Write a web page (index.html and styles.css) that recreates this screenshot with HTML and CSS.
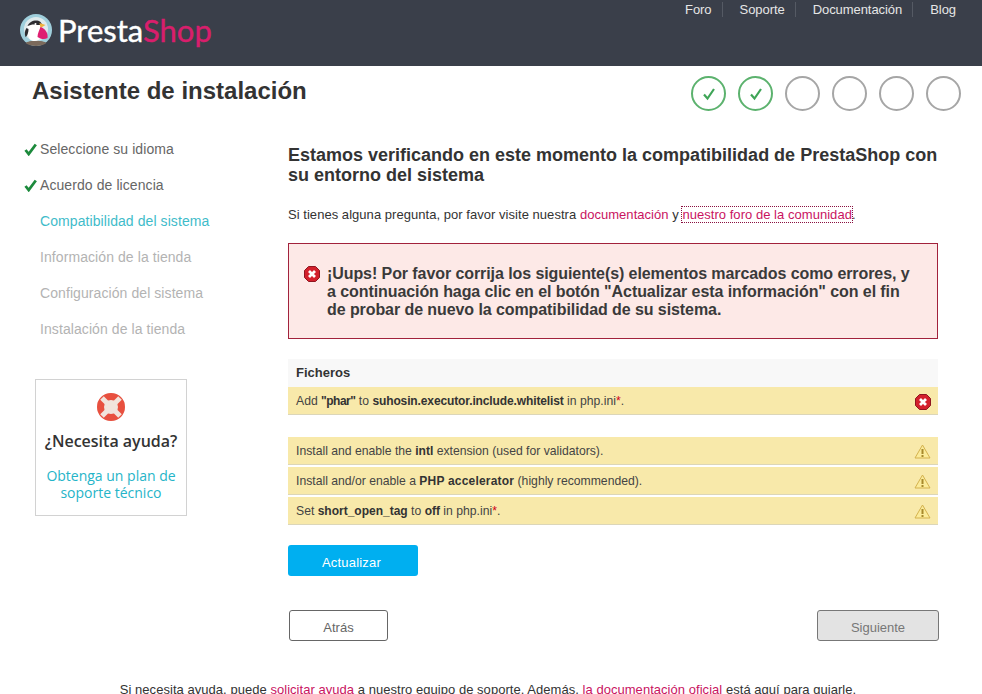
FILE: index.html
```html
<!DOCTYPE html>
<html lang="es">
<head>
  <meta charset="UTF-8" />
  <meta name="viewport" content="width=device-width, initial-scale=1" />
  <title>Asistente de instalación</title>
  <link rel="stylesheet" href="styles.css">
</head>
<body>

<!-- Top bar -->
<header class="topbar">
  <a class="logo" href="#">
    <svg class="logo-mark" width="34" height="33" viewBox="0 0 33 33">
      <circle cx="16.5" cy="16" r="16" fill="#9fcfdc"/>
      <circle cx="16.5" cy="15" r="12" fill="#dfeaec"/>
      <path d="M6 29c3-3 18-3 21 0c-5 4-16 4-21 0z" fill="#7b6a5c"/>
      <path d="M8 12c2-5 9-7 13-4c1 2 1 3 0 4c1 5 1 10-2 14c-3 2-7 1-9-1c-2-4-3-9-2-13z" fill="#fff"/>
      <path d="M8 12c2-5 9-7 13-4l2 3l-6 0c-3-1-6 0-9 1z" fill="#2c2c30"/>
      <path d="M7 14c-2 3-2 6-1 9c2-1 3-5 3-8z" fill="#2c2c30"/>
      <path d="M20 9l6 2l-5 3z" fill="#f0b23c"/>
      <path d="M21 13c4 1 8 6 7 11c-3 2-7 1-10-1c0-4 2-7 3-10z" fill="#df1f72"/>
      <circle cx="16" cy="10" r="1" fill="#fff"/>
    </svg>
    <span class="logo-text">Presta<span class="logo-shop">Shop</span></span>
  </a>
  <nav class="topnav">
    <a href="#">Foro</a>
    <a href="#">Soporte</a>
    <a href="#">Documentación</a>
    <a href="#">Blog</a>
  </nav>
</header>

<!-- Title and progress -->
<div class="titlebar">
  <h1>Asistente de instalación</h1>
  <ol class="progress">
    <li class="done"><svg width="16" height="16" viewBox="0 0 16 16"><path d="M3 8.500l3.500 4L13 3" fill="none" stroke="#3fa557" stroke-width="2.200"/></svg></li>
    <li class="done"><svg width="16" height="16" viewBox="0 0 16 16"><path d="M3 8.500l3.500 4L13 3" fill="none" stroke="#3fa557" stroke-width="2.200"/></svg></li>
    <li></li>
    <li></li>
    <li></li>
    <li></li>
  </ol>
</div>

<div class="layout">
  <aside class="sidebar">
    <ul class="steps">
      <li class="step-done">
        <svg class="tick" width="13" height="13" viewBox="0 0 13 13"><path d="M1.500 7l3.200 4L11.800 1.500" fill="none" stroke="#1c8a3c" stroke-width="2.800"/></svg>
        Seleccione su idioma
      </li>
      <li class="step-done">
        <svg class="tick" width="13" height="13" viewBox="0 0 13 13"><path d="M1.500 7l3.200 4L11.800 1.500" fill="none" stroke="#1c8a3c" stroke-width="2.800"/></svg>
        Acuerdo de licencia
      </li>
      <li class="step-current">Compatibilidad del sistema</li>
      <li>Información de la tienda</li>
      <li>Configuración del sistema</li>
      <li>Instalación de la tienda</li>
    </ul>

    <div class="helpbox">
      <svg width="28" height="28" viewBox="0 0 28 28">
        <circle cx="14" cy="14" r="14" fill="#f1e4dc"/>
        <circle cx="14" cy="14" r="10.500" fill="none" stroke="#e8503f" stroke-width="7"/>
        <path d="M5 5l5 5M23 5l-5 5M5 23l5-5M23 23l-5-5" stroke="#f1e4dc" stroke-width="5"/>
      </svg>
      <h3>¿Necesita ayuda?</h3>
      <a href="#">Obtenga un plan de soporte técnico</a>
    </div>
  </aside>

  <main class="content">
    <h2>Estamos verificando en este momento la compatibilidad de PrestaShop con su entorno del sistema</h2>
    <p class="intro">Si tienes alguna pregunta, por favor visite nuestra <a href="#">documentación</a> y <a class="focused" href="#">nuestro foro de la comunidad</a>.</p>

    <div class="alert">
      <svg class="alert-icon" width="16" height="16" viewBox="0 0 16 16">
        <path d="M4.500 .5h7l4 4v7l-4 4h-7l-4-4v-7z" fill="#d3202c" stroke="#8e1620" stroke-linejoin="round"/>
        <path d="M5 5l6 6M11 5l-6 6" stroke="#fff" stroke-width="2.800"/>
      </svg>
      <p>¡Uups! Por favor corrija los siguiente(s) elementos marcados como errores, y a continuación haga clic en el botón "Actualizar esta información" con el fin de probar de nuevo la compatibilidad de su sistema.</p>
    </div>

    <div class="checks">
      <div class="checks-head">Ficheros</div>
      <div class="check">
        <span>Add <b class="quoted">"phar"</b> to <b class="tight">suhosin.executor.include.whitelist</b> in php.ini<i>*</i>.</span>
        <svg width="16" height="16" viewBox="0 0 16 16">
          <path d="M4.500 .5h7l4 4v7l-4 4h-7l-4-4v-7z" fill="#d3202c" stroke="#8e1620" stroke-linejoin="round"/>
          <path d="M5 5l6 6M11 5l-6 6" stroke="#fff" stroke-width="2.800"/>
        </svg>
      </div>
    </div>

    <div class="checks checks-warn">
      <div class="check">
        <span>Install and enable the <b>intl</b> extension (used for validators).</span>
        <svg width="17" height="15" viewBox="0 0 17 15"><path d="M8.500 1L16 14H1z" fill="#fbeb9a" stroke="#d4b24e"/><path d="M8.500 5v5M8.500 11v2" stroke="#a88a2c" stroke-width="2"/></svg>
      </div>
      <div class="check">
        <span>Install and/or enable a <b class="wide">PHP accelerator</b> (highly recommended).</span>
        <svg width="17" height="15" viewBox="0 0 17 15"><path d="M8.500 1L16 14H1z" fill="#fbeb9a" stroke="#d4b24e"/><path d="M8.500 5v5M8.500 11v2" stroke="#a88a2c" stroke-width="2"/></svg>
      </div>
      <div class="check">
        <span>Set <b>short_open_tag</b> to <b>off</b> in php.ini<i>*</i>.</span>
        <svg width="17" height="15" viewBox="0 0 17 15"><path d="M8.500 1L16 14H1z" fill="#fbeb9a" stroke="#d4b24e"/><path d="M8.500 5v5M8.500 11v2" stroke="#a88a2c" stroke-width="2"/></svg>
      </div>
    </div>

    <button class="btn-refresh">Actualizar</button>

    <div class="actions">
      <button class="btn-back">Atrás</button>
      <button class="btn-next">Siguiente</button>
    </div>
  </main>
</div>

<footer class="footer">
  Si necesita ayuda, puede <a href="#">solicitar ayuda</a> a nuestro equipo de soporte. Además, <a href="#">la documentación oficial</a> está aquí para guiarle.
</footer>

</body>
</html>
```

FILE: styles.css
```css
html, body {
  margin: 0;
  padding: 0;
  height: 694px;
  overflow: hidden;
}

body {
  font-family: "Liberation Sans", Arial, sans-serif;
  font-size: 13px;
  color: #333;
  background: #fff;
}

a {
  color: #c9135f;
  text-decoration: none;
}

/* Top bar */
.topbar {
  height: 66px;
  background: #3a3f4a;
  display: flex;
  justify-content: space-between;
  align-items: flex-start;
  padding: 0 26px 0 19px;
}
.logo {
  display: flex;
  align-items: center;
  gap: 5px;
  height: 60px;
}
.logo-text {
  font-family: Lato, sans-serif;
  font-size: 31px;
  color: #fff;
  -webkit-text-stroke: 0.4px currentColor;
}
.logo-shop {
  color: #d81e6c;
}
.topnav {
  display: flex;
  padding-top: 2px;
}
.topnav a {
  color: #e6e6e6;
  font-size: 13px;
  line-height: 15px;
  letter-spacing: -0.06px;
  padding-left: 17px;
}
.topnav a:not(:last-child) {
  border-right: 1px solid #555a64;
  padding-right: 10px;
}
.topnav a:first-child {
  padding-left: 0;
}

/* Title and progress */
.titlebar {
  display: flex;
  justify-content: space-between;
  padding: 10px 21px 0 32px;
  height: 49px;
}
h1 {
  margin: 0;
  font-size: 24px;
  line-height: 30px;
  color: #333;
}
.progress {
  list-style: none;
  display: flex;
  gap: 12px;
  margin: 0;
  padding: 0;
  height: 35px;
}
.progress li {
  box-sizing: border-box;
  width: 35px;
  height: 35px;
  border: 2px solid #a6a6a6;
  border-radius: 50%;
  display: flex;
  align-items: center;
  justify-content: center;
}
.progress li.done {
  border-color: #5cb26e;
}

/* Columns */
.layout {
  display: flex;
}
.sidebar {
  width: 288px;
  flex: none;
}
.steps {
  list-style: none;
  margin: 0;
  padding: 6px 0 0 40px;
  font-size: 14px;
  letter-spacing: 0.08px;
  color: #b3b3b3;
}
.steps li {
  height: 36px;
  line-height: 36px;
  position: relative;
}
.step-done {
  color: #666;
}
.steps li.step-current {
  color: #3fbcca;
}
.tick {
  position: absolute;
  left: -16px;
  top: 12px;
}

.helpbox {
  box-sizing: border-box;
  width: 152px;
  height: 137px;
  margin: 32px 0 0 35px;
  border: 1px solid #d2d2d2;
  padding: 13px 8px 0;
  text-align: center;
  font-family: "Open Sans", sans-serif;
}
.helpbox svg {
  display: block;
  margin: 0 auto;
}
.helpbox h3 {
  margin: 9px 0 0;
  font-size: 16px;
  line-height: 22px;
  font-weight: 600;
  color: #333;
}
.helpbox a {
  display: block;
  margin-top: 15px;
  font-size: 14px;
  line-height: 17px;
  color: #25b4c8;
}

/* Main column */
.content {
  width: 650px;
  flex: none;
}
h2 {
  margin: 0;
  padding-top: 20px;
  font-size: 18px;
  line-height: 20px;
  color: #333;
}
.intro {
  margin: 21px 0 0;
  line-height: 18px;
  letter-spacing: 0.04px;
}
.focused {
  outline: 1px dotted #8a1040;
}

.alert {
  box-sizing: border-box;
  height: 96px;
  margin-top: 19px;
  padding: 21px 20px 0 15px;
  background: #fde9e7;
  border: 1px solid #a2223c;
  display: flex;
  gap: 7px;
}
.alert-icon {
  flex: none;
  margin-top: 1px;
}
.alert p {
  margin: 0;
  font-size: 16px;
  font-weight: bold;
  line-height: 18px;
  letter-spacing: -0.08px;
  color: #3a3a3a;
}

.checks {
  margin-top: 20px;
}
.checks-warn {
  margin-top: 22px;
}
.checks-head {
  height: 28px;
  line-height: 28px;
  padding-left: 8px;
  background: #f8f8f8;
  font-weight: bold;
  color: #333;
}
.check {
  box-sizing: border-box;
  height: 28px;
  padding: 0 7px 0 8px;
  background: #f8e9aa;
  border-bottom: 1px solid #dcd6b8;
  font-size: 12.200px;
  color: #444;
  display: flex;
  justify-content: space-between;
  align-items: center;
}
.check b {
  font-size: 12px;
  color: #333;
}
.check b.quoted {
  letter-spacing: -0.5px;
}
.check b.tight {
  letter-spacing: -0.12px;
}
.check b.wide {
  letter-spacing: 0.2px;
}
.check svg {
  flex: none;
  margin-top: 2px;
}
.checks-warn .check + .check {
  margin-top: 2px;
}
.check i {
  color: #d0021b;
  font-style: normal;
}

button {
  font-family: "Liberation Sans", Arial, sans-serif;
  font-size: 13px;
  height: 31px;
  padding: 4px 0 0;
  border-radius: 3px;
  cursor: pointer;
}
.btn-refresh {
  display: block;
  width: 130px;
  margin-top: 20px;
  padding-right: 3px;
  background: #00aff0;
  border: none;
  color: #fff;
  letter-spacing: 0.2px;
}
.actions {
  display: flex;
  justify-content: space-between;
  margin: 34px -1px 0 1px;
}
.btn-back {
  width: 99px;
  background: #fff;
  border: 1px solid #666;
  color: #666;
}
.btn-next {
  width: 122px;
  background: #e3e3e3;
  border: 1px solid #777;
  color: #777;
}

.footer {
  margin-top: 41px;
  text-align: center;
  width: 976px;
  line-height: 15px;
  letter-spacing: 0.04px;
  color: #333;
}
```
